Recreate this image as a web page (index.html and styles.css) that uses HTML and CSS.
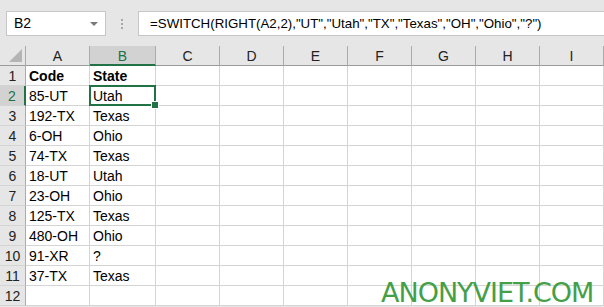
FILE: index.html
```html
<!DOCTYPE html>
<html lang="en">
<head>
  <meta charset="UTF-8">
  <title>SWITCH</title>
  <link rel="stylesheet" href="styles.css">
</head>
<body>
  <div class="toolbar">
    <div class="namebox">B2<span class="arrow"></span></div>
    <div class="dots"><span></span><span></span><span></span></div>
    <div class="formula">=SWITCH(RIGHT(A2,2),"UT","Utah","TX","Texas","OH","Ohio","?")</div>
  </div>

  <div class="sheet">
    <div class="hd corner"><span class="tri"></span></div>
    <div class="hd col">A</div>
    <div class="hd col active">B</div>
    <div class="hd col">C</div>
    <div class="hd col">D</div>
    <div class="hd col">E</div>
    <div class="hd col">F</div>
    <div class="hd col">G</div>
    <div class="hd col">H</div>
    <div class="hd col">I</div>

    <div class="hd row">1</div><div class="c bold">Code</div><div class="c bold">State</div><div class="c"></div><div class="c"></div><div class="c"></div><div class="c"></div><div class="c"></div><div class="c"></div><div class="c"></div>
    <div class="hd row active">2</div><div class="c">85-UT</div><div class="c sel">Utah</div><div class="c"></div><div class="c"></div><div class="c"></div><div class="c"></div><div class="c"></div><div class="c"></div><div class="c"></div>
    <div class="hd row">3</div><div class="c">192-TX</div><div class="c">Texas</div><div class="c"></div><div class="c"></div><div class="c"></div><div class="c"></div><div class="c"></div><div class="c"></div><div class="c"></div>
    <div class="hd row">4</div><div class="c">6-OH</div><div class="c">Ohio</div><div class="c"></div><div class="c"></div><div class="c"></div><div class="c"></div><div class="c"></div><div class="c"></div><div class="c"></div>
    <div class="hd row">5</div><div class="c">74-TX</div><div class="c">Texas</div><div class="c"></div><div class="c"></div><div class="c"></div><div class="c"></div><div class="c"></div><div class="c"></div><div class="c"></div>
    <div class="hd row">6</div><div class="c">18-UT</div><div class="c">Utah</div><div class="c"></div><div class="c"></div><div class="c"></div><div class="c"></div><div class="c"></div><div class="c"></div><div class="c"></div>
    <div class="hd row">7</div><div class="c">23-OH</div><div class="c">Ohio</div><div class="c"></div><div class="c"></div><div class="c"></div><div class="c"></div><div class="c"></div><div class="c"></div><div class="c"></div>
    <div class="hd row">8</div><div class="c">125-TX</div><div class="c">Texas</div><div class="c"></div><div class="c"></div><div class="c"></div><div class="c"></div><div class="c"></div><div class="c"></div><div class="c"></div>
    <div class="hd row">9</div><div class="c">480-OH</div><div class="c">Ohio</div><div class="c"></div><div class="c"></div><div class="c"></div><div class="c"></div><div class="c"></div><div class="c"></div><div class="c"></div>
    <div class="hd row">10</div><div class="c">91-XR</div><div class="c">?</div><div class="c"></div><div class="c"></div><div class="c"></div><div class="c"></div><div class="c"></div><div class="c"></div><div class="c"></div>
    <div class="hd row">11</div><div class="c">37-TX</div><div class="c">Texas</div><div class="c"></div><div class="c"></div><div class="c"></div><div class="c"></div><div class="c"></div><div class="c"></div><div class="c"></div>
    <div class="hd row">12</div><div class="c"></div><div class="c"></div><div class="c"></div><div class="c"></div><div class="c"></div><div class="c"></div><div class="c"></div><div class="c"></div><div class="c"></div>
  </div>

  <div class="watermark">ANONYVIET.COM</div>
</body>
</html>
```

FILE: styles.css
```css
body {
  margin: 0;
  background-color: #e6e6e6;
  font-family: "Liberation Sans", Arial, sans-serif;
  color: #000;
  position: relative;
  height: 307px;
  overflow: hidden;
}
.toolbar {
  display: flex;
  align-items: center;
  height: 25px;
  padding: 11px 0 10px 6px;
}
.namebox {
  width: 100px;
  height: 25px;
  box-sizing: border-box;
  background-color: #fff;
  border: 1px solid #c6c6c6;
  font-size: 14px;
  line-height: 23px;
  padding-left: 7px;
  position: relative;
}
.arrow {
  position: absolute;
  right: 7px;
  top: 10px;
  border-left: 4px solid transparent;
  border-right: 4px solid transparent;
  border-top: 4px solid #7a7a7a;
}
.dots {
  width: 32px;
  display: flex;
  flex-direction: column;
  align-items: center;
  gap: 2px;
}
.dots span {
  width: 2px;
  height: 2px;
  background-color: #a8a8a8;
}
.formula {
  flex: 1;
  height: 25px;
  box-sizing: border-box;
  background-color: #fff;
  border: 1px solid #c6c6c6;
  border-right: none;
  font-size: 13.3px;
  line-height: 23px;
  padding-left: 11px;
  white-space: nowrap;
  overflow: hidden;
}
.sheet {
  display: grid;
  grid-template-columns: 26px 64px 66px repeat(7, 64px);
  grid-auto-rows: 20px;
  background-color: #fff;
}
.hd {
  background-color: #e6e6e6;
  box-sizing: border-box;
  font-size: 14px;
  color: #222;
}
.corner {
  border-right: 1px solid #ababab;
  border-bottom: 1px solid #9b9b9b;
  position: relative;
}
.tri {
  position: absolute;
  right: 3px;
  bottom: 3px;
  border-left: 13px solid transparent;
  border-bottom: 13px solid #b4b4b4;
}
.col {
  border-right: 1px solid #ababab;
  border-bottom: 1px solid #9b9b9b;
  text-align: center;
  line-height: 20px;
}
.col.active {
  background-color: #d2d2d2;
  color: #217346;
  border-bottom: 2px solid #217346;
}
.row {
  border-right: 1px solid #ababab;
  border-bottom: 1px solid #d4d4d4;
  text-align: center;
  line-height: 20px;
}
.row.active {
  background-color: #d2d2d2;
  color: #217346;
  border-right: 2px solid #217346;
}
.c {
  box-sizing: border-box;
  border-right: 1px solid #d4d4d4;
  border-bottom: 1px solid #d4d4d4;
  font-size: 14px;
  line-height: 21px;
  padding-left: 3px;
  white-space: nowrap;
}
.bold {
  font-weight: bold;
}
.sel {
  position: relative;
}
.sel::after {
  content: "";
  position: absolute;
  left: -1px;
  top: -1px;
  right: -1px;
  bottom: -1px;
  border: 2px solid #217346;
}
.sel::before {
  content: "";
  position: absolute;
  right: -4px;
  bottom: -4px;
  width: 6px;
  height: 6px;
  background-color: #217346;
  border: 1px solid #fff;
  z-index: 1;
}
.watermark {
  position: absolute;
  left: 381px;
  top: 281px;
  font-family: "DejaVu Sans", sans-serif;
  font-size: 27px;
  letter-spacing: -1px;
  color: #44a047;
  line-height: 24px;
}
```
